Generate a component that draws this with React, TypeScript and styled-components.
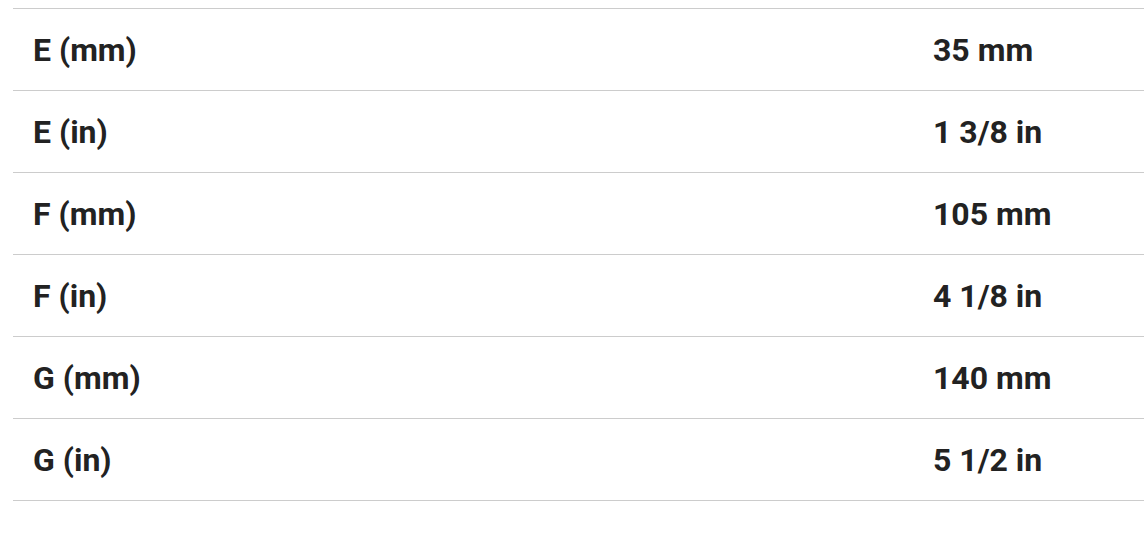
import React from 'react';
import styled, { createGlobalStyle } from 'styled-components';

const GlobalStyle = createGlobalStyle`
  body {
    margin: 0;
    background: #ffffff;
    font-family: Roboto, "Liberation Sans", Arial, sans-serif;
    overflow: hidden;
  }
`;

const Wrapper = styled.div`
  padding: 8px 0 0 13px;
`;

const Table = styled.table`
  width: 100%;
  border-collapse: collapse;
  border-top: 1px solid #cccccc;
`;

const Row = styled.tr`
  border-bottom: 1px solid #cccccc;
`;

const Cell = styled.td<{ $wide?: boolean }>`
  height: 81px;
  padding: 0 0 0 20px;
  width: ${(p) => (p.$wide ? '880px' : 'auto')};
  font-size: 32px;
  font-weight: 700;
  color: #222222;
  vertical-align: middle;
  white-space: nowrap;
`;

const rows = [
  ['E (mm)', '35 mm'],
  ['E (in)', '1 3/8 in'],
  ['F (mm)', '105 mm'],
  ['F (in)', '4 1/8 in'],
  ['G (mm)', '140 mm'],
  ['G (in)', '5 1/2 in'],
];

export default function App() {
  return (
    <>
      <GlobalStyle />
      <Wrapper>
        <Table>
          <tbody>
            {rows.map(([name, value]) => (
              <Row key={name}>
                <Cell $wide>{name}</Cell>
                <Cell>{value}</Cell>
              </Row>
            ))}
          </tbody>
        </Table>
      </Wrapper>
    </>
  );
}
